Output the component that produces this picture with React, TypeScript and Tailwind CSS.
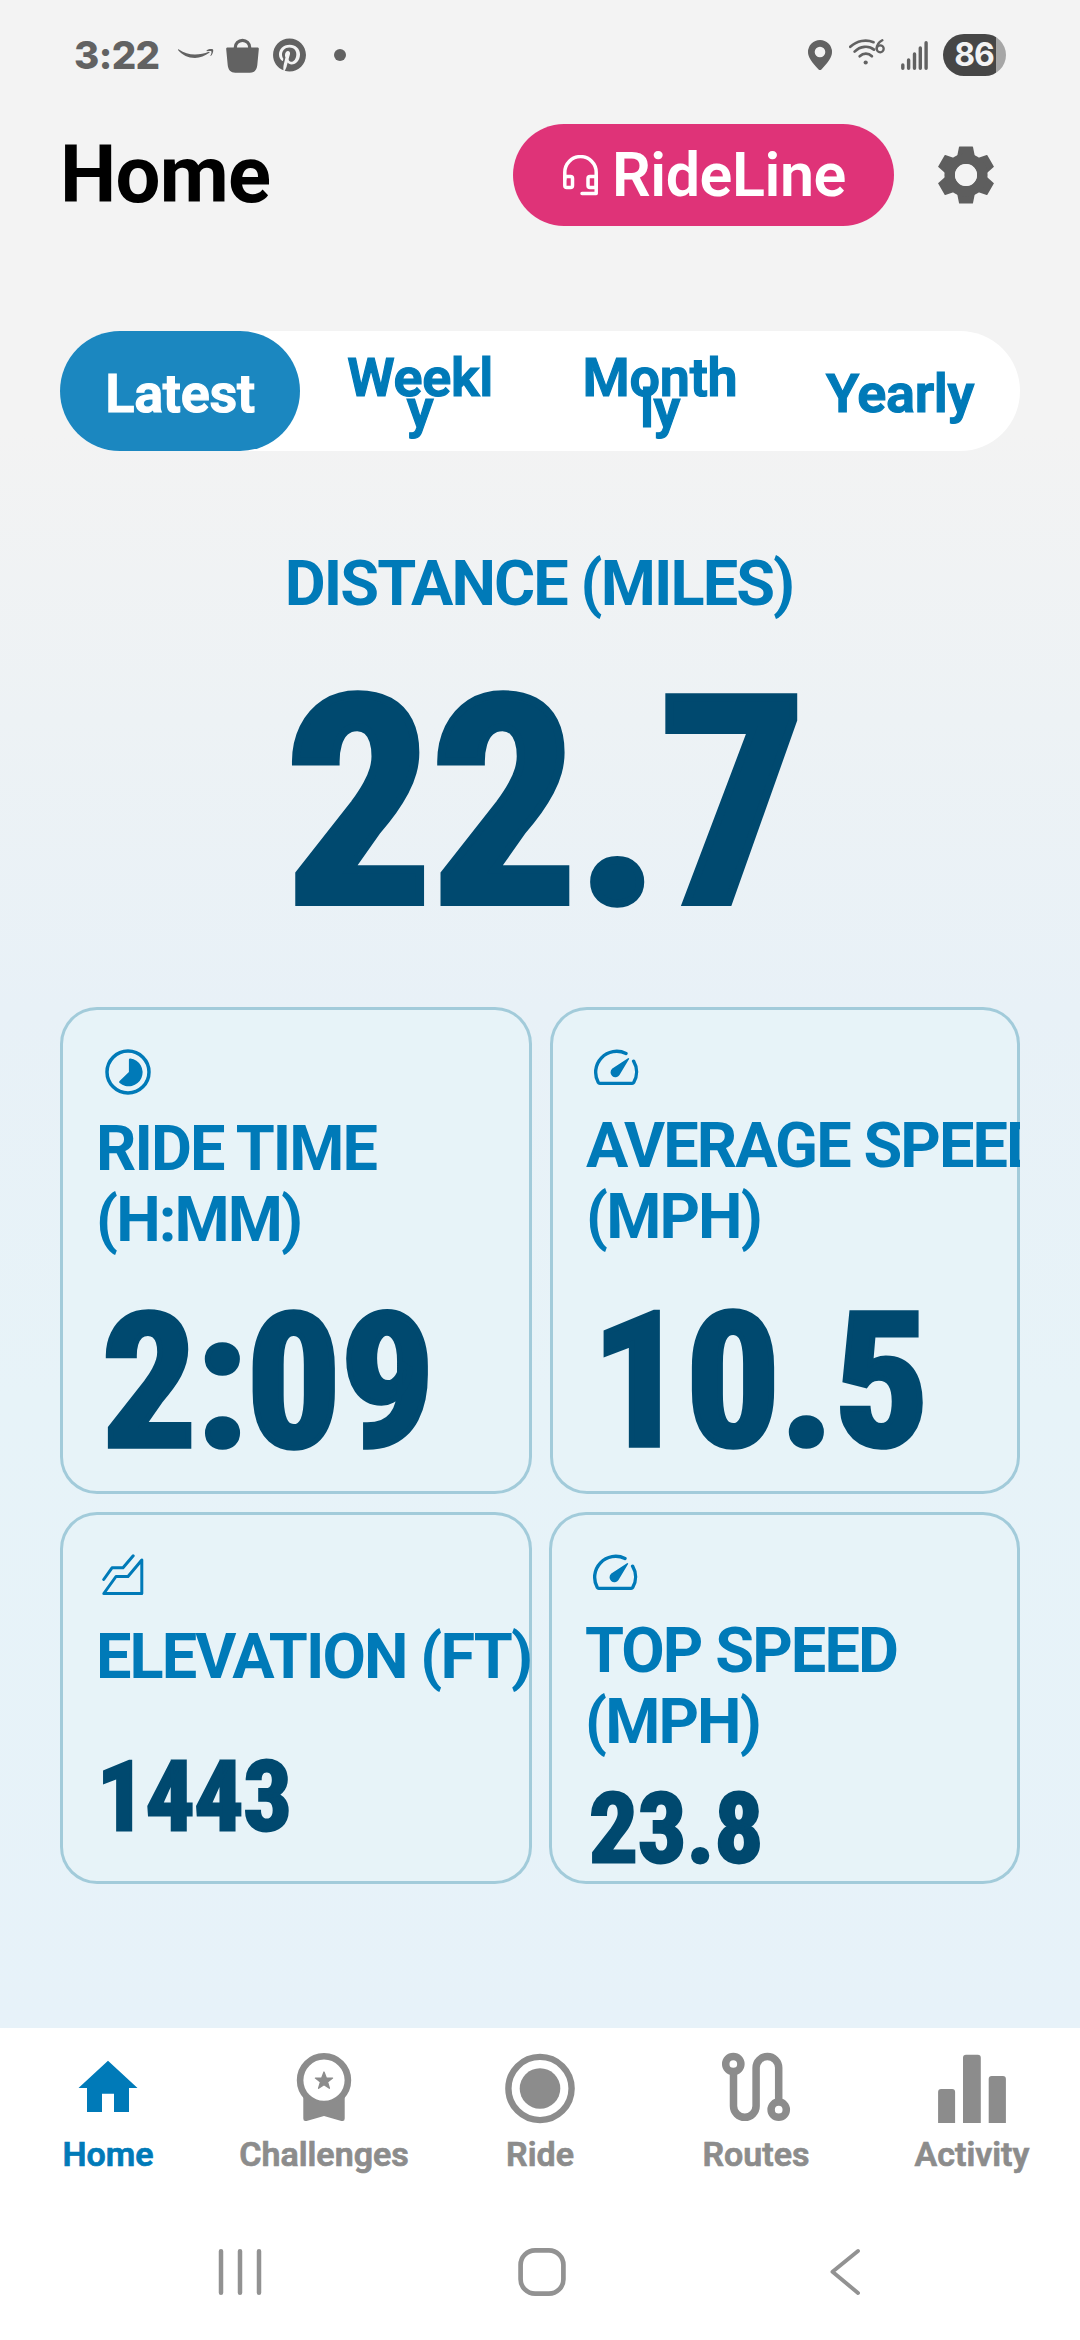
import React from 'react';
import { FaPinterest } from 'react-icons/fa';

function SmileIcon() {
  return (
    <svg className="ml-[17px] h-[12px] w-[38px]" viewBox="0 0 38 12" fill="#626262">
      <path d="M1.2 1.2C.6.9 1-.1 1.9.4 7 3.6 12 5.4 18 5.4c4.700 0 9.600-1 13.700-2.700.8-.3 1.300.6.6 1.100C28.200 6.900 23 8.900 18 8.900 11 8.900 5.500 6 1.200 1.200z" />
      <path d="M29.700 1.300C31.600-.2 35.200-.2 36 .4c.7.800-.1 4.700-2.100 6.500-.3.300-.6.100-.5-.200.5-1.200 1.500-3.700 1-4.300-.5-.7-3.200-.4-4.400-.2-.5 0-.6-.5-.3-.9z" />
    </svg>
  );
}

function BagIcon() {
  return (
    <svg className="ml-[11px] h-[35px] w-[33px]" viewBox="0 0 33 35">
      <path d="M9.300 12V9.500a7.200 7.200 0 0 1 14.400 0V12" fill="none" stroke="#626262" strokeWidth="3.200" />
      <path d="M1.500 9.500h30c.9 0 1.500.8 1.300 1.700L31.300 27c-.5 5-3 7.700-7.500 7.700H9.200c-4.500 0-7-2.700-7.500-7.700L.2 11.200C0 10.300.6 9.500 1.500 9.500z" fill="#626262" />
    </svg>
  );
}

function PinIcon() {
  return (
    <svg className="h-[31px] w-[24px]" viewBox="0 0 24 31" fill="#626262">
      <path fillRule="evenodd" d="M12 0a12 12 0 0 1 12 12c0 5-3.500 10-10.600 17.400a2 2 0 0 1-2.800 0C3.500 22 0 17 0 12A12 12 0 0 1 12 0zm0 6.700a5.300 5.300 0 1 0 0 10.600 5.300 5.300 0 0 0 0-10.600z" />
    </svg>
  );
}

function WifiIcon() {
  return (
    <svg className="-mt-[5px] ml-[17px] h-[27px] w-[36px]" viewBox="0 0 36 27">
      <g fill="none" stroke="#626262" strokeWidth="2.700" strokeLinecap="round">
        <path d="M1.300 7.800C8 1.600 17 .1 24.500 3.200" />
        <path d="M5.600 12.600c5.500-5.500 14-6.500 19.400-2" />
        <path d="M10.700 17.300c3.700-3.500 8.700-3.500 12.200 0" />
      </g>
      <circle cx="16.700" cy="23.500" r="2.100" fill="#626262" />
      <path d="M33.300 1.300C30 3 27.700 6 27.700 9.800" fill="none" stroke="#626262" strokeWidth="2.400" strokeLinecap="round" />
      <circle cx="31.200" cy="9.800" r="3.500" fill="none" stroke="#626262" strokeWidth="2.300" />
    </svg>
  );
}

function SignalIcon() {
  return (
    <svg className="ml-[16px] h-[29px] w-[27px]" viewBox="0 0 27 29" stroke="#626262" strokeWidth="3.400" strokeLinecap="round">
      <path d="M1.800 24v3.300M7.600 19v8.300M13.500 13v14.300M19.300 7v20.300M25.100 1.700v25.600" />
    </svg>
  );
}

function GearIcon() {
  const angles = [0, 60, 120, 180, 240, 300];
  return (
    <svg className="ml-[43px] h-[58px] w-[58px]" viewBox="-29 -29 58 58" fill="#5e5e5e">
      {angles.map((a) => (
        <path key={a} d="M-6.500-28.400h13q.4 0 .5.500L9-18H-9l2-9.900q.1-.5.500-.5z" transform={`rotate(${a})`} />
      ))}
      <circle r="16.300" fill="none" stroke="#5e5e5e" strokeWidth="10.600" />
      <circle r="11" fill="#f3f3f3" />
    </svg>
  );
}

function HeadsetIcon() {
  return (
    <svg className="h-[41px] w-[35px]" viewBox="0 0 35 41" fill="none" stroke="#fff" strokeWidth="3.500" strokeLinejoin="round" strokeLinecap="round">
      <path d="M1.800 24V17.300a15.700 15.700 0 0 1 31.400 0V38.500H19" />
      <path d="M1.800 21.500H7.500q2 0 2 2V30.500q0 2-2 2H3.800q-2 0-2-2zM33.200 21.500H27q-2 0-2 2V30.500q0 2 2 2H31.200q2 0 2-2z" />
    </svg>
  );
}

function PieTimeIcon() {
  return (
    <svg className="ml-[9px] h-[46px] w-[46px]" viewBox="-23 -23 46 46">
      <circle r="21" fill="none" stroke="#007ab8" strokeWidth="3.500" />
      <path d="M.9-12.300q0-1.400 1.500-1.300A14 14 0 1 1-8.400 11q-1-1 0-1.900L.9 0z" fill="#007ab8" />
    </svg>
  );
}

function GaugeIcon() {
  return (
    <svg className="ml-[7px] h-[37px] w-[46px]" viewBox="0 0 46 37">
      <g fill="none" stroke="#007ab8" strokeWidth="3.400" strokeLinecap="round" strokeLinejoin="round">
        <path d="M33 4.500A21 21 0 0 0 5.300 33.500q.5.900 1.500.9H39.200q1 0 1.500-.9A21 21 0 0 0 40.600 12.200" />
      </g>
      <path d="M35.800 9.200q.7.300.3.900L26.500 26a4.900 4.900 0 1 1-7.200-6.500L35 9.300q.4-.3.800-.1z" fill="#007ab8" />
    </svg>
  );
}

function ElevationIcon() {
  return (
    <svg className="ml-[6px] h-[42px] w-[42px]" viewBox="0 0 42 42" fill="none" stroke="#007ab8" strokeWidth="3" strokeLinecap="round" strokeLinejoin="round">
      <path d="M1.700 25.500 10 13.800H21L31.200 1.800" />
      <path d="M1.800 39.500 14 22.500H26L39.800 6V39.500z" />
    </svg>
  );
}

function HomeIcon() {
  return (
    <svg className="h-[76px] w-[72px]" viewBox="0 0 72 76" fill="#007ab8">
      <path d="M36 8.700 65.500 36H57V60H42V41.700H30V60H15V36H6.500z" />
    </svg>
  );
}

function ChallengesIcon() {
  return (
    <svg className="h-[76px] w-[72px]" viewBox="0 0 72 76" fill="#8c8c8c">
      <circle cx="36" cy="28.200" r="23.900" fill="none" stroke="#8c8c8c" strokeWidth="6.600" />
      <path d="M15.300 42C20 49 28 52.300 36 52.300S52 49 56.700 42V66.500q0 3.200-3.300 2.400L36 63.900 18.600 68.900q-3.300.8-3.300-2.400z" />
      <path d="M36 20 38.300 25.900l6.300.2-5 4 1.800 6.200-5.400-3.600-5.400 3.600 1.800-6.200-5-4 6.300-.2z" stroke="#8c8c8c" strokeWidth="1.300" strokeLinejoin="round" />
    </svg>
  );
}

function RideIcon() {
  return (
    <svg className="h-[76px] w-[72px]" viewBox="0 0 72 76">
      <circle cx="36" cy="36.500" r="31.600" fill="none" stroke="#8c8c8c" strokeWidth="6.400" />
      <circle cx="36" cy="36.500" r="20.300" fill="#8c8c8c" />
    </svg>
  );
}

function RoutesIcon() {
  return (
    <svg className="h-[76px] w-[72px]" viewBox="0 0 72 76" fill="none" stroke="#8c8c8c" strokeWidth="7.500">
      <path d="M13.500 19V54a11.300 11.300 0 0 0 22.600 0V15.800a11.300 11.300 0 0 1 22.600 0V51" />
      <circle cx="13.300" cy="12" r="7.600" />
      <circle cx="58.700" cy="57.700" r="7.600" />
    </svg>
  );
}

function ActivityIcon() {
  return (
    <svg className="h-[76px] w-[72px]" viewBox="0 0 72 76" fill="#8c8c8c">
      <path d="M2.100 71V40q0-3 3-3h11q3 0 3 3V71zM27 71V5.700q0-3 3-3H41.800q3 0 3 3V71zM52.700 71V27q0-3 3-3H66.900q3 0 3 3V71z" />
    </svg>
  );
}

const tabs = [
  { name: 'Latest', lines: ['Latest'], active: true },
  { name: 'Weekly', lines: ['Weekl', 'y'], active: false },
  { name: 'Monthly', lines: ['Month', 'ly'], active: false },
  { name: 'Yearly', lines: ['Yearly'], active: false },
];

const navItems = [
  { label: 'Home', Icon: HomeIcon, color: 'text-[#007ab8]' },
  { label: 'Challenges', Icon: ChallengesIcon, color: 'text-[#8c8c8c]' },
  { label: 'Ride', Icon: RideIcon, color: 'text-[#8c8c8c]' },
  { label: 'Routes', Icon: RoutesIcon, color: 'text-[#8c8c8c]' },
  { label: 'Activity', Icon: ActivityIcon, color: 'text-[#8c8c8c]' },
];

const labelClass = 'text-[63px] leading-[71px] font-bold tracking-[-1.9px] whitespace-nowrap text-[#007ab8]';
const bigClass = 'text-[186px] leading-[186px] font-bold [font-stretch:75%] [-webkit-text-stroke:5.5px_#00496f] text-[#00496f]';
const smallClass = 'text-[96.5px] leading-[97px] font-bold [font-stretch:75%] [-webkit-text-stroke:2.8px_#00496f] text-[#00496f]';
const cardClass = 'flex flex-col overflow-hidden rounded-[37px] bg-[#e7f3f8] pl-[36px] shadow-[inset_0_0_0_3px_#a2cbda]';

export default function App() {
  return (
    <div className="flex h-[2340px] w-[1080px] flex-col overflow-hidden bg-[linear-gradient(180deg,#f3f3f3_0px,#f3f3f3_430px,#edf2f5_720px,#e8f1f7_1010px,#e7f3f8_1400px,#e7f2f9_2028px)] font-['Roboto','Noto_Sans',sans-serif]">
      <div className="flex h-[110px] shrink-0 items-center justify-between pr-[74px] pl-[74px]">
        <div className="flex items-center">
          <span className="font-['Inter',sans-serif] text-[38.5px] leading-none font-extrabold tracking-[-0.6px] text-[#626262]">3:22</span>
          <SmileIcon />
          <BagIcon />
          <FaPinterest className="ml-[14px] h-[34px] w-[33px] text-[#626262]" />
          <span className="ml-[28px] size-[12px] rounded-full bg-[#626262]" />
        </div>
        <div className="flex items-center">
          <PinIcon />
          <WifiIcon />
          <SignalIcon />
          <span className="ml-[15px] flex h-[42px] w-[63px] items-center justify-center rounded-full bg-[linear-gradient(90deg,#464646_53px,#a6a6a6_53px)]">
            <span className="pr-[1px] font-['Inter',sans-serif] text-[32px] leading-none font-bold tracking-[-1px] text-[#f3f3f3]">86</span>
          </span>
        </div>
      </div>

      <header className="mt-[14px] flex h-[102px] shrink-0 items-center pr-[85px] pl-[60px]">
        <h1 className="text-[79.7px] leading-none font-bold tracking-[-0.75px] text-black">Home</h1>
        <button className="ml-auto flex h-[102px] w-[381px] items-center rounded-full bg-[#df3378] pl-[50px] text-white">
          <HeadsetIcon />
          <span className="ml-[14px] text-[61px] leading-none font-semibold tracking-[-0.45px]">RideLine</span>
        </button>
        <GearIcon />
      </header>

      <div className="mx-[60px] mt-[105px] grid h-[120px] shrink-0 grid-cols-4 rounded-full bg-white">
        {tabs.map((t) => (
          <button
            key={t.name}
            className={`flex flex-col items-center justify-center rounded-full pt-[4px] text-[54px] leading-[31px] font-semibold tracking-[-0.3px] ${t.active ? 'bg-[#1b87c0] text-white [-webkit-text-stroke:1.2px_#fff]' : 'text-[#007ab8] [-webkit-text-stroke:1.2px_#007ab8]'}`}
          >
            {t.lines.map((l) => (
              <span key={l}>{l}</span>
            ))}
          </button>
        ))}
      </div>

      <section className="mt-[97px] flex shrink-0 flex-col items-center">
        <div className={`${labelClass} pr-[2px]`}>DISTANCE (MILES)</div>
        <div className="mt-[41px] pl-[11px] text-[288px] leading-[288px] font-bold tracking-[-0.3px] text-[#00496f] [-webkit-text-stroke:8.2px_#00496f] [font-stretch:75%]">22.7</div>
      </section>

      <div className="mx-[60px] mt-[59px] flex h-[487px] shrink-0 gap-[18px]">
        <div className={`${cardClass} w-[472px] pt-[42px]`}>
          <PieTimeIcon />
          <div className={`${labelClass} mt-[18px]`}>RIDE TIME<br />(H:MM)</div>
          <div className={`${bigClass} mt-[34px] ml-[6px]`}>2:09</div>
        </div>
        <div className={`${cardClass} w-[470px] pt-[42px]`}>
          <GaugeIcon />
          <div className={`${labelClass} mt-[24px]`}>AVERAGE SPEED<br />(MPH)</div>
          <div className={`${bigClass} mt-[36px] ml-[6px]`}>10.5</div>
        </div>
      </div>

      <div className="mx-[60px] mt-[18px] flex h-[372px] shrink-0 gap-[17px]">
        <div className={`${cardClass} w-[472px] pt-[42px]`}>
          <ElevationIcon />
          <div className={`${labelClass} mt-[25px]`}>ELEVATION (FT)</div>
          <div className={`${smallClass} mt-[57px] ml-[1px]`}>1443</div>
        </div>
        <div className={`${cardClass} w-[471px] pt-[42px]`}>
          <GaugeIcon />
          <div className={`${labelClass} mt-[24px]`}>TOP SPEED<br />(MPH)</div>
          <div className={`${smallClass} mt-[24px] ml-[4px]`}>23.8</div>
        </div>
      </div>

      <nav className="mt-auto grid h-[180px] shrink-0 grid-cols-5 bg-white pt-[24px]">
        {navItems.map(({ label, Icon, color }) => (
          <a key={label} className={`flex flex-col items-center text-[34px] leading-[40px] font-semibold ${color} [-webkit-text-stroke:0.7px_currentColor]`}>
            <Icon />
            <span className="mt-[6px]">{label}</span>
          </a>
        ))}
      </nav>

      <div className="flex h-[132px] shrink-0 items-start bg-white pt-[38px] pl-[218px]">
        <svg className="h-[52px] w-[44px]" viewBox="0 0 44 52" stroke="#929292" strokeWidth="4.500" strokeLinecap="round">
          <path d="M3 5.200V46.800M22 5.200V46.800M41 5.200V46.800" />
        </svg>
        <svg className="ml-[254px] h-[52px] w-[50px]" viewBox="0 0 50 52" fill="none" stroke="#929292" strokeWidth="4.700">
          <rect x="4.600" y="4.350" width="42.800" height="43.300" rx="14.500" />
        </svg>
        <svg className="ml-[262px] h-[52px] w-[34px]" viewBox="0 0 34 52" fill="none" stroke="#929292" strokeWidth="3.900" strokeLinecap="round" strokeLinejoin="round">
          <path d="M30 5 4.500 25.700 30 47" />
        </svg>
      </div>
    </div>
  );
}
